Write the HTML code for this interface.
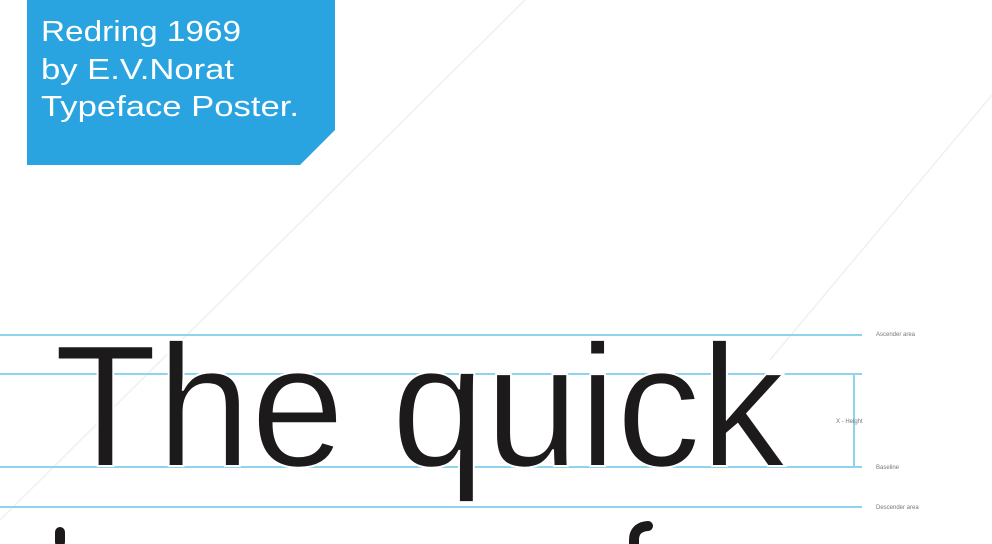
<!DOCTYPE html>
<html><head><meta charset="utf-8"><style>
html,body{margin:0;padding:0;background:#fff;width:992px;height:544px;overflow:hidden}
</style></head><body>
<svg width="992" height="544" viewBox="0 0 992 544" xmlns="http://www.w3.org/2000/svg" style="display:block">
<line x1="525" y1="0" x2="0" y2="520" stroke="#f0f0f0" stroke-width="1.5"/>
<line x1="992" y1="95" x2="770" y2="360" stroke="#f0f0f0" stroke-width="1.5"/>
<polygon points="27,0 335,0 335,130 300,165 27,165" fill="#29a4e0"/>
<g font-family="Liberation Sans, sans-serif" font-size="29" fill="#fff">
<text x="41" y="41" textLength="200" lengthAdjust="spacingAndGlyphs">Redring 1969</text>
<text x="41" y="79" textLength="193" lengthAdjust="spacingAndGlyphs">by E.V.Norat</text>
<text x="41" y="116" textLength="258" lengthAdjust="spacingAndGlyphs">Typeface Poster.</text>
</g>
<g stroke="#8fd3ec" stroke-width="2">
<line x1="0" y1="335" x2="862" y2="335"/>
<line x1="0" y1="374" x2="862" y2="374"/>
<line x1="0" y1="467" x2="862" y2="467"/>
<line x1="0" y1="507" x2="862" y2="507"/>
<line x1="854" y1="374" x2="854" y2="467"/>
</g>
<g font-family="Liberation Sans, sans-serif" font-size="6" fill="#777">
<text x="876" y="336">Ascender area</text>
<text x="836" y="423">X - Height</text>
<text x="876" y="469">Baseline</text>
<text x="876" y="509">Descender area</text>
</g>
<text x="54" y="466" font-family="Liberation Sans, sans-serif" font-size="174" fill="#1c1a1b" stroke="#fff" stroke-width="2" textLength="731" lengthAdjust="spacingAndGlyphs">The quick</text>
<rect x="55" y="527" width="10" height="20" rx="5" fill="#1c1a1b"/>
<path d="M634 544 L634 540 Q634 527 648 526" stroke="#1c1a1b" stroke-width="10" fill="none" stroke-linecap="round"/>
</svg>
</body></html>
